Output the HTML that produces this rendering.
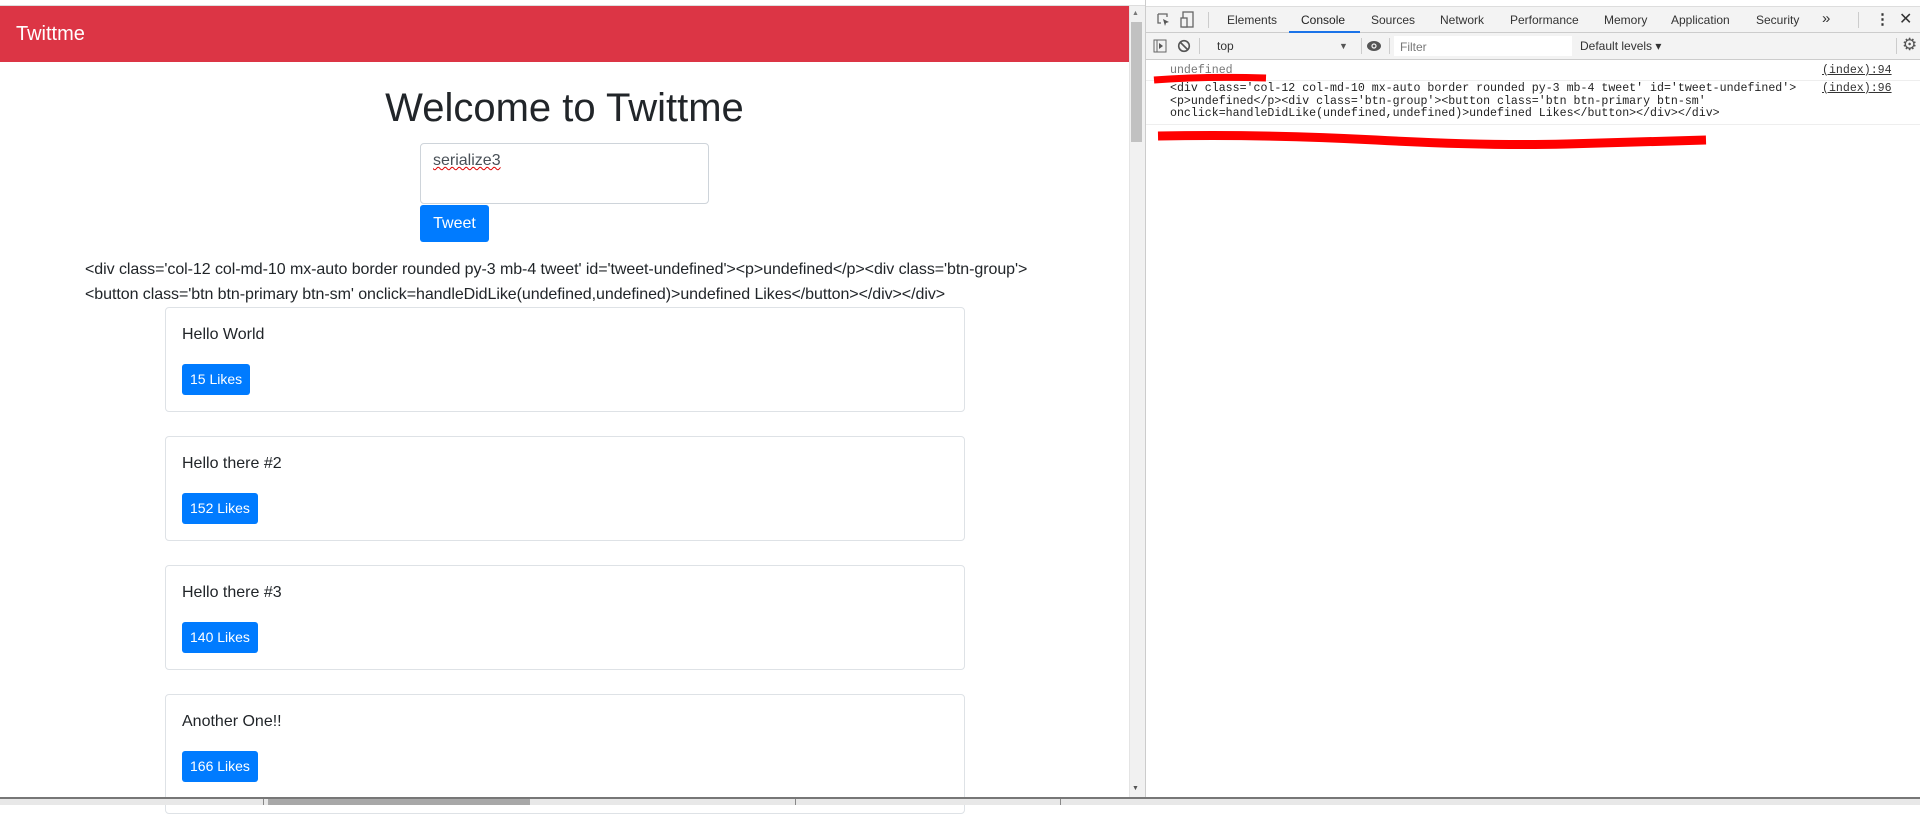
<!DOCTYPE html>
<html><head><meta charset="utf-8"><style>
*{box-sizing:border-box;margin:0;padding:0}
body{width:1920px;height:805px;overflow:hidden;background:#fff;font-family:"Liberation Sans",Arial,sans-serif;position:relative;color:#212529}
.a{position:absolute}
.nav{left:0;top:6px;width:1129px;height:56px;background:#dc3545;color:#fff;font-size:20px;line-height:56px;padding-left:16px}
h1{position:absolute;left:0;width:1129px;text-align:center;top:84px;font-size:40px;font-weight:400;line-height:48px}
.ta{left:420px;top:143px;width:289px;height:61px;border:1px solid #ced4da;border-radius:4px;padding:8px 12px;font-size:16px;color:#495057}
.btn{background:#007bff;color:#fff;border-radius:3px;text-align:center}
.raw{left:85px;top:257px;font-size:16px;line-height:25px;width:1040px;letter-spacing:-0.06px}
.card{left:165px;width:800px;height:105px;border:1px solid #dee2e6;border-radius:4px}
.card p{position:absolute;left:16px;top:18px;font-size:16px}
.card .btn{position:absolute;left:16px;top:56px;height:31px;line-height:31px;font-size:14px;padding:0 8px}
.dt{left:1145px;top:0;width:775px;height:798px;background:#fff;border-left:1px solid #ccc;font-size:12px;color:#333}
.tabs{left:0;top:6px;width:775px;height:27px;background:#f3f3f3;border-bottom:1px solid #ccc;border-top:1px solid #ddd}
.tb{left:0;top:33px;width:775px;height:27px;background:#f3f3f3;border-bottom:1px solid #ccc}
.t{position:absolute;top:6px;color:#333}
.mono{font-family:"Liberation Mono",monospace;font-size:11.6px;line-height:12.5px;color:#222}
</style></head><body>
<div class="a" style="left:0;top:0;width:1920px;height:6px;background:#fff;border-bottom:1px solid #ddd"></div>
<div class="a nav">Twittme</div>
<h1>Welcome to Twittme</h1>
<div class="a ta"><span style="text-decoration:underline wavy #d00;text-decoration-thickness:1px">serialize3</span></div>
<div class="a btn" style="left:420px;top:205px;width:69px;height:37px;line-height:37px;font-size:16px">Tweet</div>
<div class="a raw">&lt;div class='col-12 col-md-10 mx-auto border rounded py-3 mb-4 tweet' id='tweet-undefined'&gt;&lt;p&gt;undefined&lt;/p&gt;&lt;div class='btn-group'&gt;<br>&lt;button class='btn btn-primary btn-sm' onclick=handleDidLike(undefined,undefined)&gt;undefined Likes&lt;/button&gt;&lt;/div&gt;&lt;/div&gt;</div>
<div class="a card" style="top:307px"><p>Hello World</p><div class="btn">15 Likes</div></div>
<div class="a card" style="top:436px"><p>Hello there #2</p><div class="btn">152 Likes</div></div>
<div class="a card" style="top:565px"><p>Hello there #3</p><div class="btn">140 Likes</div></div>
<div class="a card" style="top:694px;height:120px"><p>Another One!!</p><div class="btn">166 Likes</div></div>
<div class="a" style="left:1129px;top:6px;width:16px;height:792px;background:#f1f1f1;border-left:1px solid #e4e4e4"></div>
<div class="a" style="left:1131px;top:22px;width:11px;height:120px;background:#c1c1c1"></div>
<div class="a" style="left:1132px;top:10px;font-size:7px;color:#777">▲</div>
<div class="a" style="left:1132px;top:785px;font-size:7px;color:#555">▼</div>
<div class="a dt">
 <div class="a tabs">
  <svg class="a" style="left:10px;top:5px" width="16" height="16"><path d="M2 2h9v3M2 2v9h3" stroke="#666" fill="none" stroke-width="1.3"/><path d="M7 7l6 3-3 1-1 3z" fill="#555"/></svg>
  <svg class="a" style="left:34px;top:4px" width="16" height="18"><rect x="3" y="1" width="10" height="15" stroke="#666" fill="none" stroke-width="1.3"/><rect x="1" y="7" width="6" height="9" stroke="#666" fill="#f3f3f3" stroke-width="1.3"/></svg>
  <div class="a" style="left:62px;top:5px;width:1px;height:16px;background:#ccc"></div>
  <span class="t" style="left:81px">Elements</span>
  <span class="t" style="left:155px;color:#222">Console</span>
  <div class="a" style="left:143px;top:24px;width:71px;height:2px;background:#1a73e8"></div>
  <span class="t" style="left:225px">Sources</span>
  <span class="t" style="left:294px">Network</span>
  <span class="t" style="left:364px">Performance</span>
  <span class="t" style="left:458px">Memory</span>
  <span class="t" style="left:525px">Application</span>
  <span class="t" style="left:610px">Security</span>
  <span class="t" style="left:676px;top:3px;font-size:15px">»</span>
  <div class="a" style="left:712px;top:5px;width:1px;height:16px;background:#ccc"></div>
  <span class="t" style="left:729px;top:3px;font-size:15px;font-weight:bold">⋮</span>
  <span class="t" style="left:753px;top:2px;font-size:16px">✕</span>
 </div>
 <div class="a tb">
  <svg class="a" style="left:7px;top:6px" width="14" height="14"><rect x="1" y="1" width="12" height="12" stroke="#666" fill="none"/><line x1="4" y1="1" x2="4" y2="13" stroke="#666"/><path d="M6 4l4 3-4 3z" fill="#555"/></svg>
  <svg class="a" style="left:31px;top:6px" width="14" height="14"><circle cx="7" cy="7" r="5.3" stroke="#555" stroke-width="1.6" fill="none"/><line x1="3.5" y1="3.5" x2="10.5" y2="10.5" stroke="#555" stroke-width="1.6"/></svg>
  <div class="a" style="left:53px;top:5px;width:1px;height:16px;background:#ccc"></div>
  <span class="t" style="left:71px">top</span>
  <span class="t" style="left:193px;font-size:9px;top:8px;color:#555">▼</span>
  <div class="a" style="left:215px;top:5px;width:1px;height:16px;background:#ccc"></div>
  <svg class="a" style="left:220px;top:7px" width="16" height="12"><ellipse cx="8" cy="6" rx="7" ry="5" fill="#555"/><circle cx="8" cy="6" r="2.6" fill="#f3f3f3"/><circle cx="8" cy="6" r="1.4" fill="#555"/></svg>
  <div class="a" style="left:243px;top:5px;width:1px;height:16px;background:#ccc"></div>
  <div class="a" style="left:248px;top:3px;width:178px;height:20px;background:#fff;color:#777;padding:4px 6px">Filter</div>
  <span class="t" style="left:434px">Default levels ▾</span>
  <div class="a" style="left:750px;top:5px;width:1px;height:16px;background:#ccc"></div>
  <span class="t" style="left:756px;top:2px;font-size:17px;color:#555">⚙</span>
 </div>
 <div class="a mono" style="left:24px;top:65px;color:#777">undefined</div>
 <div class="a mono" style="left:676px;top:65px;text-decoration:underline;color:#333">(index):94</div>
 <div class="a" style="left:0;top:80px;width:775px;height:1px;background:#eee"></div>
 <div class="a mono" style="left:24px;top:83px">&lt;div class='col-12 col-md-10 mx-auto border rounded py-3 mb-4 tweet' id='tweet-undefined'&gt;<br>&lt;p&gt;undefined&lt;/p&gt;&lt;div class='btn-group'&gt;&lt;button class='btn btn-primary btn-sm'<br>onclick=handleDidLike(undefined,undefined)&gt;undefined Likes&lt;/button&gt;&lt;/div&gt;&lt;/div&gt;</div>
 <div class="a mono" style="left:676px;top:83px;text-decoration:underline;color:#333">(index):96</div>
 <div class="a" style="left:0;top:124px;width:775px;height:1px;background:#eee"></div>
 <svg class="a" style="left:0;top:70px" width="775" height="90"><path d="M8 10 Q60 6 120 8" stroke="#f00" stroke-width="7" fill="none"/><path d="M12 66 Q120 64 230 70 T420 74 T560 70" stroke="#f00" stroke-width="9" fill="none"/></svg>
</div>
<div class="a" style="left:0;top:797px;width:1920px;height:8px;background:#e8e8e8;border-top:2px solid #777;z-index:5"></div>
<div class="a" style="left:268px;top:799px;width:262px;height:6px;background:#a8a8a8;z-index:6"></div>
<div class="a" style="left:263px;top:799px;width:1px;height:6px;background:#888;z-index:6"></div>
<div class="a" style="left:795px;top:799px;width:1px;height:6px;background:#888;z-index:6"></div>
<div class="a" style="left:1060px;top:799px;width:1px;height:6px;background:#888;z-index:6"></div>
</body></html>
